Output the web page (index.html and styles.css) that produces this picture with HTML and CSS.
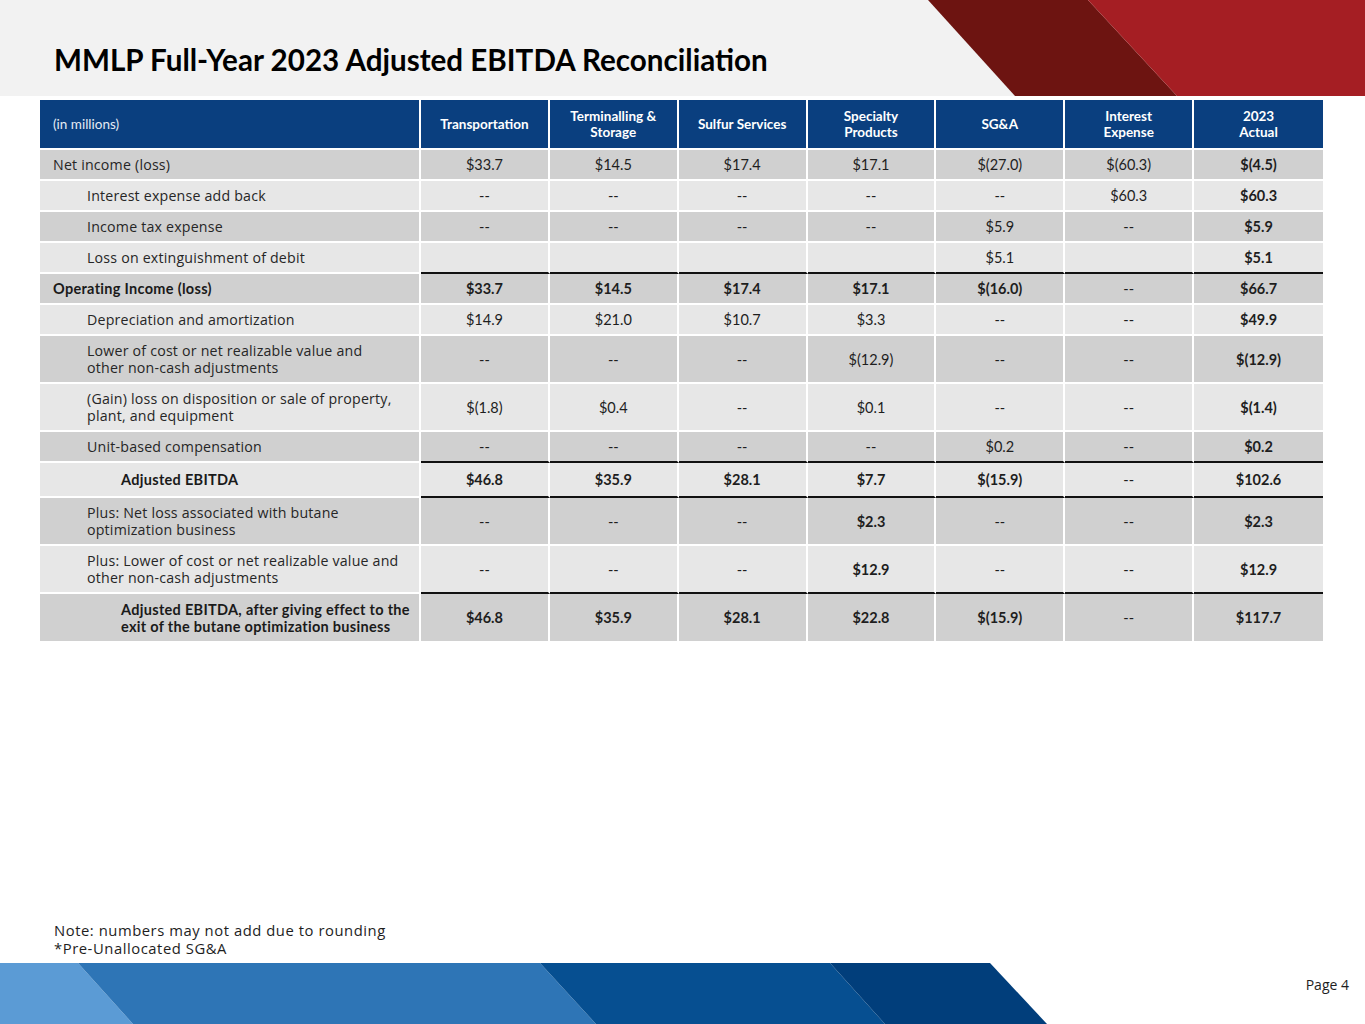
FILE: index.html
```html
<!DOCTYPE html>
<html lang="en">
<head>
<meta charset="utf-8">
<title>MMLP Full-Year 2023 Adjusted EBITDA Reconciliation</title>
<link rel="stylesheet" href="styles.css">
</head>
<body>
<div class="slide">
  <header class="band">
    <svg class="band-art" width="450" height="96" viewBox="0 0 450 96" aria-hidden="true">
      <polygon points="13,0 173,0 262,96 100,96" fill="#6d1411"/>
      <polygon points="173,0 450,0 450,96 262,96" fill="#a51e23"/>
    </svg>
    <h1 class="title">MMLP Full-Year 2023 Adjusted EBITDA Reconciliation</h1>
  </header>

  <table class="recon">
    <colgroup>
      <col class="c-label">
      <col class="c-num"><col class="c-num"><col class="c-num"><col class="c-num"><col class="c-num"><col class="c-num"><col class="c-num">
    </colgroup>
    <thead>
      <tr>
        <th class="lbl units">(in millions)</th>
        <th>Transportation</th>
        <th>Terminalling &amp;<br>Storage</th>
        <th>Sulfur Services</th>
        <th>Specialty<br>Products</th>
        <th>SG&amp;A</th>
        <th>Interest<br>Expense</th>
        <th>2023<br>Actual</th>
      </tr>
    </thead>
    <tbody>
      <tr class="dk r1">
        <td class="lbl">Net income (loss)</td>
        <td>$33.7</td><td>$14.5</td><td>$17.4</td><td>$17.1</td><td>$(27.0)</td><td>$(60.3)</td><td class="b">$(4.5)</td>
      </tr>
      <tr class="lt r1">
        <td class="lbl in1">Interest expense add back</td>
        <td>--</td><td>--</td><td>--</td><td>--</td><td>--</td><td>$60.3</td><td class="b">$60.3</td>
      </tr>
      <tr class="dk r1">
        <td class="lbl in1">Income tax expense</td>
        <td>--</td><td>--</td><td>--</td><td>--</td><td>$5.9</td><td>--</td><td class="b">$5.9</td>
      </tr>
      <tr class="lt r1 rule">
        <td class="lbl in1">Loss on extinguishment of debit</td>
        <td></td><td></td><td></td><td></td><td>$5.1</td><td></td><td class="b">$5.1</td>
      </tr>
      <tr class="dk r1 strong">
        <td class="lbl">Operating Income (loss)</td>
        <td>$33.7</td><td>$14.5</td><td>$17.4</td><td>$17.1</td><td>$(16.0)</td><td class="n">--</td><td>$66.7</td>
      </tr>
      <tr class="lt r1">
        <td class="lbl in1">Depreciation and amortization</td>
        <td>$14.9</td><td>$21.0</td><td>$10.7</td><td>$3.3</td><td>--</td><td>--</td><td class="b">$49.9</td>
      </tr>
      <tr class="dk r2">
        <td class="lbl in1">Lower of cost or net realizable value and<br>other non-cash adjustments</td>
        <td>--</td><td>--</td><td>--</td><td>$(12.9)</td><td>--</td><td>--</td><td class="b">$(12.9)</td>
      </tr>
      <tr class="lt r2">
        <td class="lbl in1">(Gain) loss on disposition or sale of property,<br>plant, and equipment</td>
        <td>$(1.8)</td><td>$0.4</td><td>--</td><td>$0.1</td><td>--</td><td>--</td><td class="b">$(1.4)</td>
      </tr>
      <tr class="dk r1 rule">
        <td class="lbl in1">Unit-based compensation</td>
        <td>--</td><td>--</td><td>--</td><td>--</td><td>$0.2</td><td>--</td><td class="b">$0.2</td>
      </tr>
      <tr class="lt r15 strong rule">
        <td class="lbl in2">Adjusted EBITDA</td>
        <td>$46.8</td><td>$35.9</td><td>$28.1</td><td>$7.7</td><td>$(15.9)</td><td class="n">--</td><td>$102.6</td>
      </tr>
      <tr class="dk r2">
        <td class="lbl in1">Plus: Net loss associated with butane<br>optimization business</td>
        <td>--</td><td>--</td><td>--</td><td class="b">$2.3</td><td>--</td><td>--</td><td class="b">$2.3</td>
      </tr>
      <tr class="lt r2 rule">
        <td class="lbl in1">Plus: Lower of cost or net realizable value and<br>other non-cash adjustments</td>
        <td>--</td><td>--</td><td>--</td><td class="b">$12.9</td><td>--</td><td>--</td><td class="b">$12.9</td>
      </tr>
      <tr class="dk r2 strong last">
        <td class="lbl in2">Adjusted EBITDA, after giving effect to the<br>exit of the butane optimization business</td>
        <td>$46.8</td><td>$35.9</td><td>$28.1</td><td>$22.8</td><td>$(15.9)</td><td class="n">--</td><td>$117.7</td>
      </tr>
    </tbody>
  </table>

  <div class="notes">
    <p>Note: numbers may not add due to rounding</p>
    <p>*Pre-Unallocated SG&amp;A</p>
  </div>

  <footer class="foot">
    <svg class="foot-art" width="1365" height="61" viewBox="0 0 1365 61" aria-hidden="true">
      <polygon points="0,0 78,0 133,61 0,61" fill="#5b9bd5"/>
      <polygon points="78,0 540,0 596,61 133,61" fill="#2e75b6"/>
      <polygon points="540,0 830,0 885,61 596,61" fill="#064f91"/>
      <polygon points="830,0 990,0 1047,61 885,61" fill="#013e7b"/>
    </svg>
    <span class="page">Page 4</span>
  </footer>
</div>
</body>
</html>
```

FILE: styles.css
```css
* { box-sizing: border-box; }

html, body {
  margin: 0;
  padding: 0;
  background: #ffffff;
}

body {
  font-family: "Lato", "Open Sans", sans-serif;
  color: #1e1e1e;
}

.slide {
  width: 1365px;
  height: 1024px;
  display: flex;
  flex-direction: column;
  overflow: hidden;
}

/* Header band */
.band {
  position: relative;
  height: 96px;
  background: #f2f2f2;
  padding: 42px 0 0 54px;
  flex: none;
}

.band-art {
  position: absolute;
  top: 0;
  right: 0;
}

.title {
  margin: 0;
  font-family: "Lato", sans-serif;
  font-weight: 700;
  font-size: 29.6px;
  line-height: 36px;
  color: #000000;
  letter-spacing: 0;
}

/* Table */
.recon {
  margin: 4px 0 0 40px;
  width: 1283px;
  table-layout: fixed;
  border-collapse: separate;
  border-spacing: 0;
  font-size: 14.5px;
  flex: none;
}

.c-label { width: 381px; }
.c-num { width: 128.857px; }

.recon th,
.recon td {
  border-right: 2px solid #ffffff;
  border-bottom: 2px solid #ffffff;
  text-align: center;
  vertical-align: middle;
  padding: 0 4px;
  white-space: nowrap;
}

.recon th:last-child,
.recon td:last-child {
  border-right: 0;
}

.recon thead th {
  height: 50px;
  background: #0a3f7f;
  color: #ffffff;
  font-size: 13.5px;
  font-weight: 700;
  line-height: 16px;
}

.recon thead th.units {
  font-weight: 400;
  color: #e4ebf4;
  font-size: 13.5px;
}

.recon .lbl {
  text-align: left;
  padding-left: 13px;
  line-height: 17px;
}

.recon tbody .lbl {
  font-family: "Open Sans", "Lato", sans-serif;
  font-size: 14.2px;
  letter-spacing: 0.2px;
  color: #262626;
}

.recon tbody tr.strong .lbl {
  font-family: "Lato", sans-serif;
  font-size: 14.5px;
  letter-spacing: 0.3px;
  color: #1a1a1a;
}

.recon .in1 { padding-left: 47px; }
.recon .in2 { padding-left: 81px; }

.recon tr.dk td { background: #d0d0d0; }
.recon tr.lt td { background: #e7e7e7; }

.recon tr.r1 td { height: 31px; }
.recon tr.r2 td { height: 48px; }
.recon tr.r15 td { height: 35px; }
.recon tr.last td { border-bottom: 0; height: 47px; }

.recon tr.rule td:not(.lbl) {
  border-bottom-color: #111111;
}

.recon tr.strong td,
.recon td.b {
  font-weight: 700;
}

.recon tr.strong td.n {
  font-weight: 400;
}

/* Notes */
.notes {
  margin-top: auto;
  padding: 0 0 6px 54px;
  font-family: "Open Sans", "Lato", sans-serif;
  font-size: 14.8px;
  letter-spacing: 0.55px;
  line-height: 18px;
  color: #1e1e1e;
}

.notes p { margin: 0; }

/* Footer */
.foot {
  position: relative;
  height: 61px;
  flex: none;
}

.foot-art { display: block; }

.page {
  position: absolute;
  right: 16px;
  top: 12px;
  font-family: "Open Sans", sans-serif;
  font-size: 14px;
  color: #1e1e1e;
}
```
